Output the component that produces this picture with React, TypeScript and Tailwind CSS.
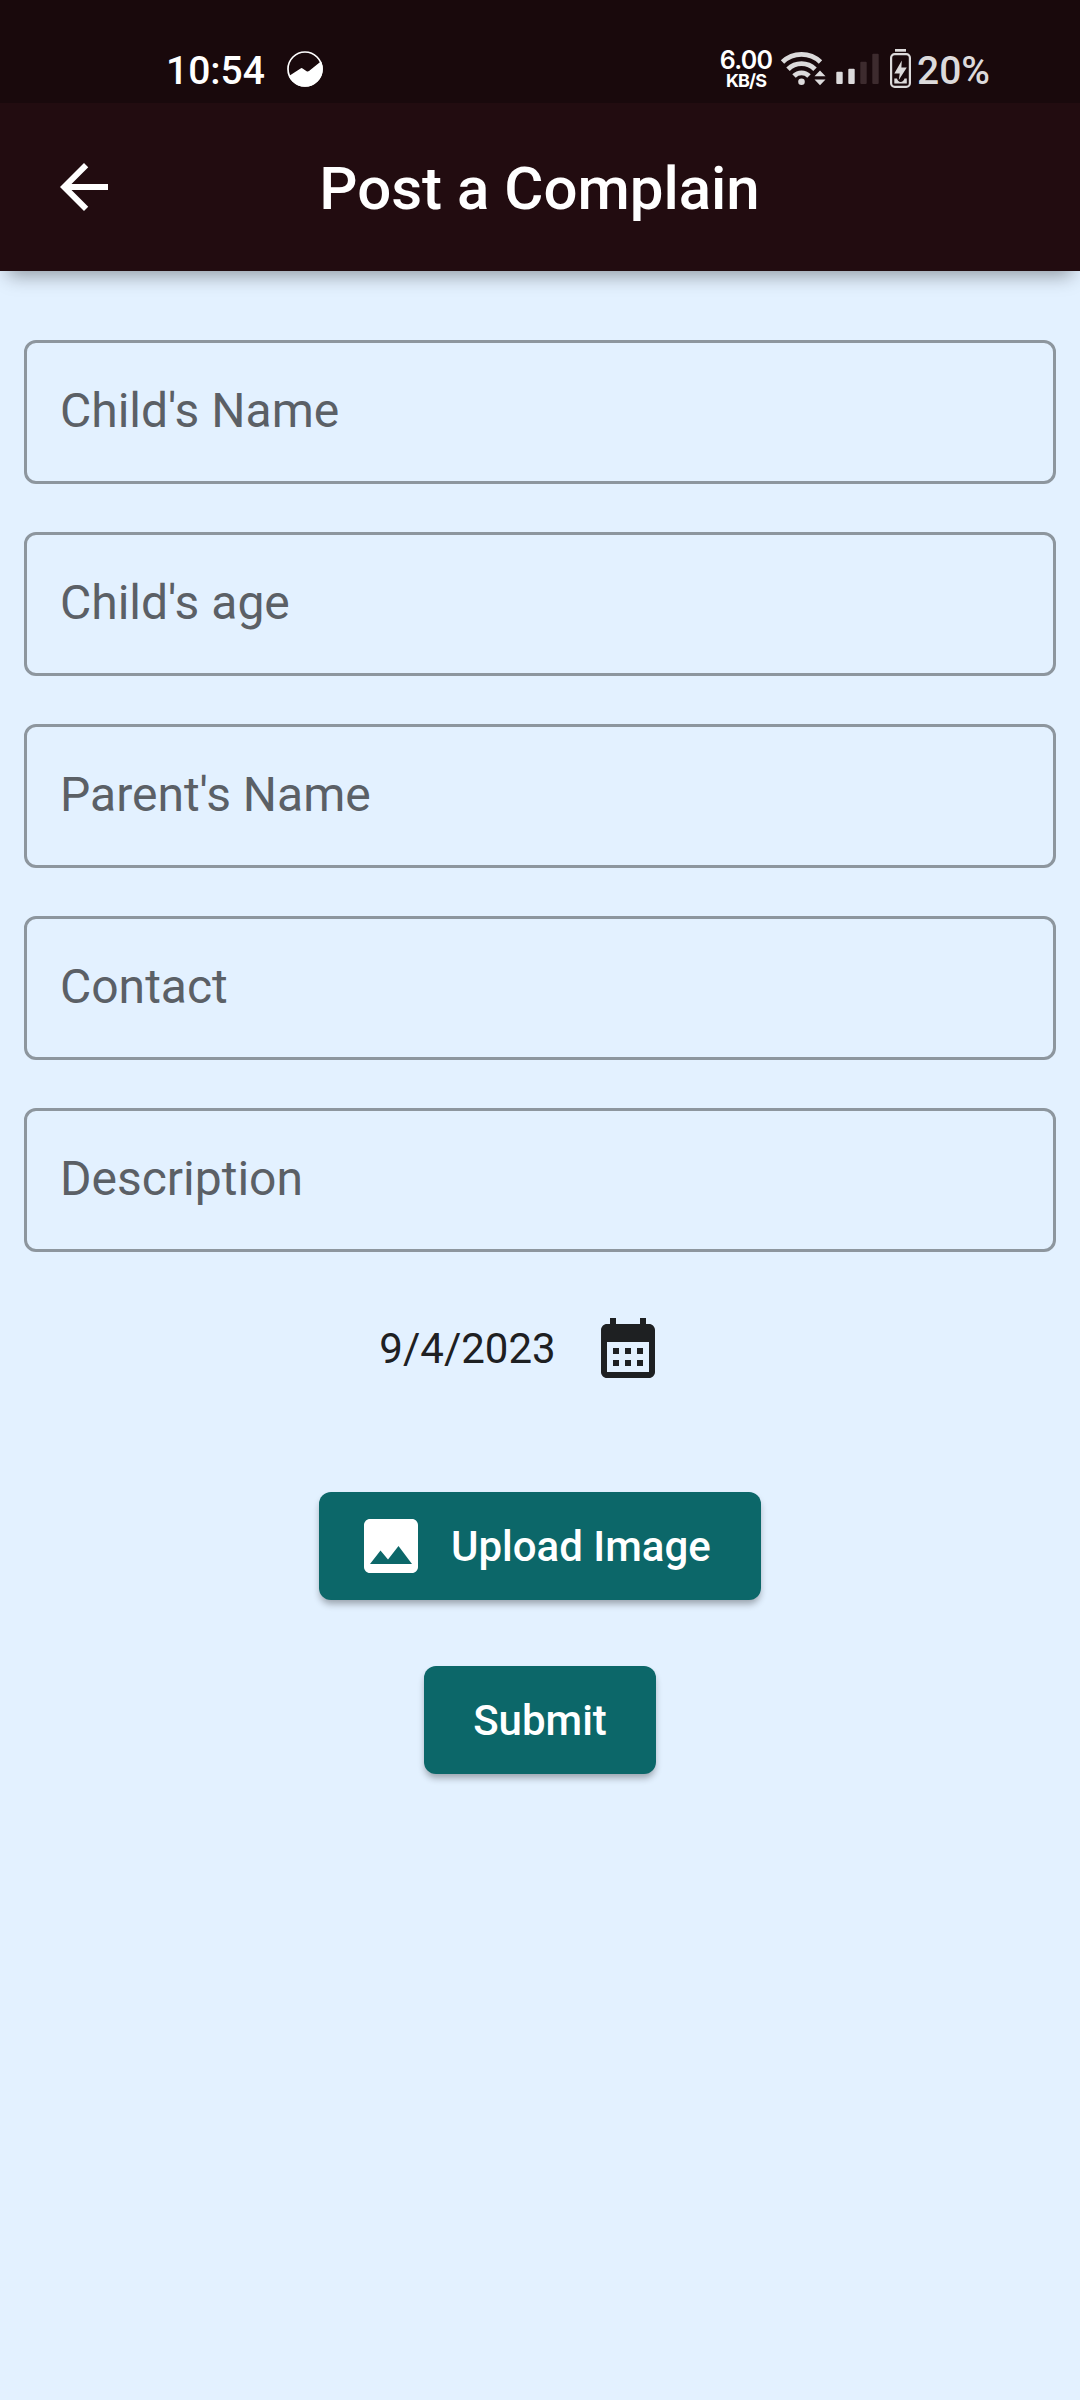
import React from "react";

const fields = ["Child's Name", "Child's age", "Parent's Name", "Contact", "Description"];

function StatusBar() {
  return (
    <div className="flex h-[103px] items-start bg-[#19090c] pr-[90px] pl-[166px] text-white">
      <span className="mt-[47px] w-[102px] text-[39px] leading-[48px] font-medium whitespace-nowrap">10:54</span>
      <svg className="mt-[50px] ml-[18px] h-[38px] w-[38px]" viewBox="0 0 38 38">
        <clipPath id="disc">
          <circle cx="19" cy="19" r="17.8" />
        </clipPath>
        <circle cx="19" cy="19" r="17" fill="none" stroke="#fff" strokeWidth="1.7" />
        <path clipPath="url(#disc)" d="M0 28 L14.6 18.4 Q15.6 17.8 16.6 18.5 L20.6 21.2 Q21.8 21.9 23 21.1 L38 9 V38 H0Z" fill="#fff" />
      </svg>
      <div className="mt-[48px] ml-auto flex w-[54px] flex-col items-center font-['Inter',sans-serif] whitespace-nowrap">
        <span className="text-[25px] leading-[24px] font-semibold tracking-[-0.7px]">6.00</span>
        <span className="text-[18px] leading-[18px] font-bold tracking-[-0.9px]">KB/S</span>
      </div>
      <svg className="mt-[48px] ml-[7px] h-[40px] w-[46px]" viewBox="780 48 46 40" fill="none" stroke="#dcdadb">
        <path d="M782.5 62 A27.5 27.5 0 0 1 820.5 62" strokeWidth="4.9" />
        <path d="M788 69.3 A19 19 0 0 1 815 69.3" strokeWidth="4.9" />
        <path d="M794 76 A10.6 10.6 0 0 1 809 76" strokeWidth="4.9" />
        <circle cx="801.5" cy="81.7" r="3.3" fill="#dcdadb" stroke="none" />
        <path d="M814.5 76.3 L820 70.6 L825.5 76.3Z M814.5 79.5 L820 85.3 L825.5 79.5Z" fill="#dcdadb" stroke="none" />
      </svg>
      <svg className="mt-[53px] ml-[10px] h-[32px] w-[43px]" viewBox="836 53 43 32">
        <rect x="836.3" y="71.7" width="6.4" height="12.3" rx="1" fill="#dcdadb" />
        <rect x="848.3" y="68.7" width="6.4" height="15.3" rx="1" fill="#dcdadb" />
        <rect x="860.3" y="61.7" width="6.4" height="22.3" rx="1" fill="#3d2b2e" />
        <rect x="872.3" y="53.7" width="6.4" height="30.3" rx="1" fill="#3d2b2e" />
      </svg>
      <svg className="mt-[48px] ml-[11px] h-[41px] w-[22px]" viewBox="890 48 22 41">
        <rect x="895" y="49" width="11" height="2.7" fill="#dcdadb" />
        <rect x="891.1" y="54.1" width="18.8" height="32.8" rx="3.6" fill="none" stroke="#dcdadb" strokeWidth="2.2" />
        <path d="M901.8 60.5 L894.3 73.5 H899.7 L898.8 80 L906.8 67.6 H901.4Z" fill="#dcdadb" />
        <path d="M894.3 78.6 H897 Q898 82 900.5 82 Q903.5 82 904.5 78.6 H906.8 V83.5 H894.3Z" fill="#dcdadb" />
      </svg>
      <span className="mt-[47px] ml-[5px] w-[73px] text-[39px] leading-[48px] font-medium whitespace-nowrap text-[#dcdadb]">20%</span>
    </div>
  );
}

function AppBar() {
  return (
    <header className="relative shadow-[0_12px_18px_-8px_rgba(0,0,0,0.38)]">
      <StatusBar />
      <div className="grid h-[168px] grid-cols-[168px_1fr_168px] items-center bg-[#220c10] text-white">
        <button aria-label="Back" className="ml-[48px] h-[72px] w-[72px]">
          <svg viewBox="0 0 24 24" className="h-[72px] w-[72px]" fill="currentColor">
            <path d="M20 11H7.83l5.59-5.59L12 4l-8 8 8 8 1.41-1.41L7.83 13H20v-2z" />
          </svg>
        </button>
        <h1 className="pt-[3px] pr-px text-center text-[60px] leading-[72px] font-medium">Post a Complain</h1>
      </div>
    </header>
  );
}

export default function App() {
  return (
    <div className="h-[2400px] w-[1080px] overflow-hidden bg-[#e3f1ff] font-['Roboto',sans-serif]">
      <AppBar />
      <main className="flex flex-col items-center px-6 pt-[69px]">
        <div className="flex w-full flex-col gap-12">
          {fields.map((label) => (
            <input
              key={label}
              placeholder={label}
              className="h-36 w-full rounded-xl border-[3px] border-[#8d969e] bg-transparent px-[33px] pb-1 text-[48px] outline-none placeholder:text-[#5b6066] placeholder:opacity-100"
            />
          ))}
        </div>
        <div className="mt-6 flex h-36 items-center">
          <span className="pt-[2px] text-[42px] leading-[48px] text-[#1e2022]">9/4/2023</span>
          <button aria-label="Pick date" className="flex h-36 w-[145px] items-center justify-center text-[#1e2022]">
            <svg viewBox="0 0 24 24" className="h-[72px] w-[72px]" fill="currentColor">
              <path d="M19 4h-1V2h-2v2H8V2H6v2H5c-1.11 0-1.99.9-1.99 2L3 20c0 1.1.89 2 2 2h14c1.1 0 2-.9 2-2V6c0-1.1-.9-2-2-2zm0 16H5V10h14v10zM9 14H7v-2h2v2zm4 0h-2v-2h2v2zm4 0h-2v-2h2v2zm-8 4H7v-2h2v2zm4 0h-2v-2h2v2zm4 0h-2v-2h2v2z" />
            </svg>
          </button>
        </div>
        <button className="mt-[72px] flex h-[108px] w-[442px] items-center gap-6 rounded-xl bg-[#0c6769] px-9 text-[42px] font-medium whitespace-nowrap text-white shadow-[0_5px_7px_-1px_rgba(0,0,0,0.32)]">
          <svg viewBox="0 0 24 24" className="h-[72px] w-[72px] shrink-0" fill="currentColor">
            <path d="M21 19V5c0-1.1-.9-2-2-2H5c-1.1 0-2 .9-2 2v14c0 1.1.9 2 2 2h14c1.1 0 2-.9 2-2zM8.5 13.5l2.5 3.01L14.5 12l4.5 6H5l3.5-4.5z" />
          </svg>
          Upload Image
        </button>
        <button className="mt-[66px] h-[108px] w-[232px] rounded-xl bg-[#0c6769] text-[42px] font-medium text-white shadow-[0_5px_7px_-1px_rgba(0,0,0,0.32)]">
          Submit
        </button>
      </main>
    </div>
  );
}
